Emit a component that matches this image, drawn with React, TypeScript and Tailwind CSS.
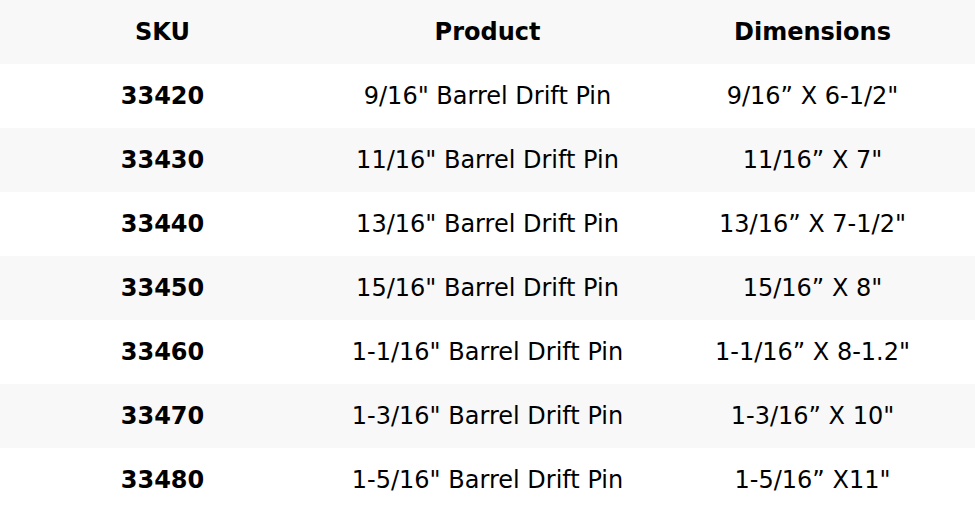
const rows = [
  ['33420', '9/16" Barrel Drift Pin', '9/16\u201d X 6-1/2"'],
  ['33430', '11/16" Barrel Drift Pin', '11/16\u201d X 7"'],
  ['33440', '13/16" Barrel Drift Pin', '13/16\u201d X 7-1/2"'],
  ['33450', '15/16" Barrel Drift Pin', '15/16\u201d X 8"'],
  ['33460', '1-1/16" Barrel Drift Pin', '1-1/16\u201d X 8-1.2"'],
  ['33470', '1-3/16" Barrel Drift Pin', '1-3/16\u201d X 10"'],
  ['33480', '1-5/16" Barrel Drift Pin', '1-5/16\u201d X11"'],
];

export default function App() {
  return (
    <div className="w-[975px] bg-white font-['DejaVu_Sans',sans-serif] text-[24px] text-black">
      <div className="grid h-16 grid-cols-3 items-center bg-[#f8f8f8] text-center font-bold">
        <div>SKU</div>
        <div>Product</div>
        <div>Dimensions</div>
      </div>
      {rows.map((r, i) => (
        <div
          key={r[0]}
          className={`grid h-16 grid-cols-3 items-center text-center ${i % 2 === 1 ? 'bg-[#f8f8f8]' : 'bg-white'}`}
        >
          <div className="font-bold">{r[0]}</div>
          <div>{r[1]}</div>
          <div>{r[2]}</div>
        </div>
      ))}
    </div>
  );
}
